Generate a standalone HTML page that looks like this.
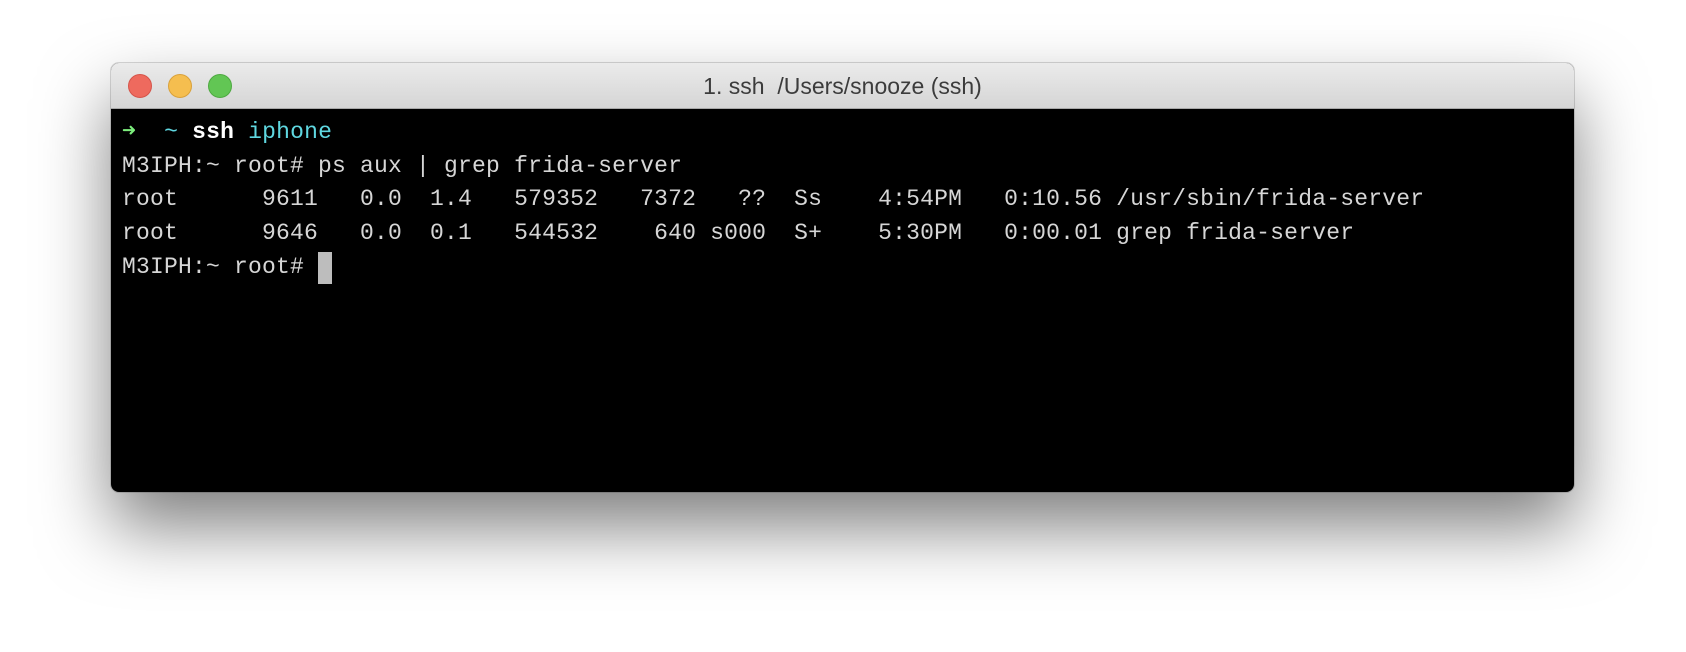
<!DOCTYPE html>
<html><head><style>
html,body{margin:0;padding:0;width:1686px;height:652px;background:#fff;overflow:hidden}
.win{position:absolute;left:111px;top:63px;width:1463px;height:429px;border-radius:8px;background:#000;
box-shadow:0 35px 70px rgba(0,0,0,0.5),0 0 0 1px rgba(0,0,0,0.15);overflow:hidden}
.tb{height:45px;background:linear-gradient(#ebebeb,#d5d5d5);border-bottom:1px solid #a8a8a8;position:relative}
.dot{position:absolute;top:11px;width:24px;height:24px;border-radius:50%;box-sizing:border-box}
.title{position:absolute;left:0;right:0;top:0;font:23px "Liberation Sans",sans-serif;line-height:46px;text-align:center;color:#3c3c3c}
.term{padding:7px 0 0 11px;font:23px/33.7px "Liberation Mono",monospace;letter-spacing:0.2px;color:#d6d6d6;white-space:pre}
.cur{display:inline-block;width:14px;height:32px;background:#bdbdbd;vertical-align:top;margin-top:1px}
</style></head><body>
<div class="win">
<div class="tb">
<div class="dot" style="left:17px;background:#ee6a5e;border:1px solid #d5544a"></div>
<div class="dot" style="left:57px;background:#f5be4f;border:1px solid #d9a13a"></div>
<div class="dot" style="left:97px;background:#62c654;border:1px solid #4ea941"></div>
<div class="title">1. ssh &nbsp;/Users/snooze (ssh)</div>
</div>
<div class="term"><span style="color:#7dee7d;font-weight:bold">➜</span>  <span style="color:#5fd7e0">~</span> <b style="color:#fff">ssh</b> <span style="color:#5fd7e0">iphone</span>
M3IPH:~ root# ps aux | grep frida-server
root      9611   0.0  1.4   579352   7372   ??  Ss    4:54PM   0:10.56 /usr/sbin/frida-server
root      9646   0.0  0.1   544532    640 s000  S+    5:30PM   0:00.01 grep frida-server
M3IPH:~ root# <span class="cur"></span></div>
</div>
</body></html>
